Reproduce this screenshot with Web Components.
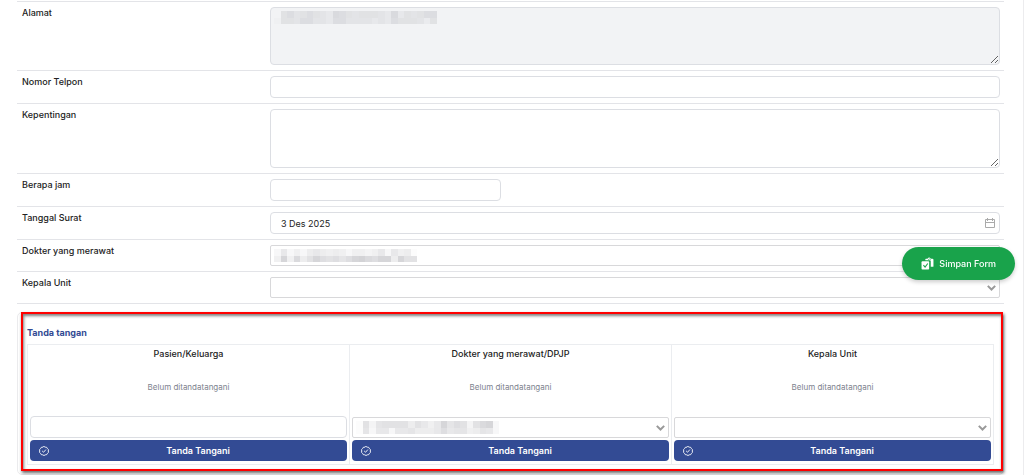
<!DOCTYPE html>
<html lang="id">
<head>
<meta charset="utf-8">
<title>Form</title>
<style>
    body {
        background: #fff;
        color: #222;
        font: 500 9px/12px Inter, "Liberation Sans", sans-serif;
        margin: 0;
    }
</style>
</head>
<body>
<surat-form></surat-form>

<script>
const controlStyles = `
    * {
        box-sizing: border-box;
    }

    input, textarea, select {
        appearance: none;
        background: white;
        border: 1px solid #dcdee3;
        border-radius: 4px;
        color: inherit;
        display: block;
        font: inherit;
        font-weight: 400;
        height: 22px;
        margin: 0;
        outline: none;
        padding: 0 10px;
        width: 100%;
    }

    textarea {
        height: 59px;
        padding: 5px 10px;
        resize: vertical;
    }

    textarea:disabled {
        background: #f2f3f5;
        height: 58px;
    }

    select {
        border-color: #d8d8da;
        border-radius: 2px;
        height: 21px;
    }
`;

// Obscured value, one hex digit per block: 0 is clear, f is darkest
class MaskedValue extends HTMLElement {
    constructor() {
        super();
        this.attachShadow({ mode: 'open' });
    }

    connectedCallback() {
        const rows = this.getAttribute('pattern').split('/');
        const width = rows[0].length * 10;
        const height = rows.length * 10;
        const cells = rows.map((row, y) => [...row].map((digit, x) =>
            `<rect x="${x * 10}" y="${y * 10}" width="10" height="10" fill-opacity="${parseInt(digit, 16) / 60}"/>`
        ).join('')).join('');
        this.shadowRoot.innerHTML = `
            <style>
                :host {
                    display: block;
                    left: 4px;
                    pointer-events: none;
                    position: absolute;
                    top: 4px;
                }

                svg {
                    display: block;
                    fill: #223;
                    height: 13px;
                }
            </style>
            <svg viewBox="0 0 ${width} ${height}" shape-rendering="crispEdges" aria-hidden="true">${cells}</svg>
        `;
    }
}

class SelectBox extends HTMLElement {
    constructor() {
        super();
        this.attachShadow({ mode: 'open' });
    }

    connectedCallback() {
        this.shadowRoot.innerHTML = `
            <style>
                ${controlStyles}

                :host {
                    display: block;
                    position: relative;
                }

                svg {
                    height: 6px;
                    pointer-events: none;
                    position: absolute;
                    right: 4px;
                    top: 8px;
                    width: 9px;
                }
            </style>
            <select aria-label="${this.getAttribute('label')}"><option></option></select>
            <slot></slot>
            <svg viewBox="0 0 9 6" fill="none" stroke="#999" stroke-width="2"><path d="M.8 .9 4.5 4.5 8.2 .9"/></svg>
        `;
    }
}

class FormRow extends HTMLElement {
    constructor() {
        super();
        this.attachShadow({ mode: 'open' });
    }

    connectedCallback() {
        const label = this.getAttribute('label');
        const type = this.getAttribute('type');
        const controls = {
            area: '<textarea id="control"></textarea>',
            locked: '<textarea id="control" disabled></textarea>',
            text: '<input id="control" type="text">',
            short: '<input id="control" class="short" type="text">',
            date: `
                <input id="control" type="text" value="${this.getAttribute('value')}">
                <svg class="calendar" viewBox="0 0 10 10" fill="none" stroke="#aaa"><path d="M.5 1.5h9v8h-9zM.5 4.5h9M2.5 0v3M7.5 0v3"/></svg>
            `,
            select: `<select-box label="${label}"><slot></slot></select-box>`
        };
        // The select box names its own control
        const caption = type === 'select' ? `<span>${label}</span>` : `<label for="control">${label}</label>`;
        this.shadowRoot.innerHTML = `
            <style>
                ${controlStyles}

                :host {
                    border-bottom: 1px solid #e3e4e8;
                    display: grid;
                    grid-template-columns: 248px 1fr;
                    padding: 5px 4px 5px 5px;
                }

                #field {
                    position: relative;
                }

                .short {
                    max-width: 231px;
                }

                .calendar {
                    height: 10px;
                    position: absolute;
                    right: 5px;
                    top: 6px;
                    width: 10px;
                }
            </style>
            ${caption}
            <div id="field">
                ${controls[type]}
                ${type === 'select' ? '' : '<slot></slot>'}
            </div>
        `;
    }
}

class SignCell extends HTMLElement {
    constructor() {
        super();
        this.attachShadow({ mode: 'open' });
    }

    connectedCallback() {
        const name = this.getAttribute('name');
        const control = this.hasAttribute('select')
            ? `<select-box label="${name}"><slot></slot></select-box>`
            : `<input type="text" aria-label="${name}">`;
        this.shadowRoot.innerHTML = `
            <style>
                ${controlStyles}

                :host {
                    border-right: 1px solid #ebedf0;
                    display: flex;
                    flex-direction: column;
                    padding: 3px 2px;
                    text-align: center;
                }

                h3 {
                    font: inherit;
                    margin: 0;
                }

                p {
                    color: #7d828e;
                    font-size: 8px;
                    font-weight: 400;
                    margin: 21px 0 auto;
                }

                #actions {
                    display: grid;
                    gap: 2px;
                    margin-top: 23px;
                }

                button {
                    align-items: center;
                    background: #334b94;
                    border: 0;
                    border-radius: 4px;
                    color: white;
                    column-gap: 9px;
                    display: grid;
                    font: inherit;
                    font-weight: 600;
                    grid-template-columns: 10px 1fr;
                    height: 21px;
                    padding: 0 9px;
                    width: 100%;
                }

                button svg {
                    height: 10px;
                    width: 10px;
                }
            </style>
            <h3>${name}</h3>
            <p>Belum ditandatangani</p>
            <div id="actions">
                ${control}
                <button type="button">
                    <svg viewBox="0 0 20 20" fill="none" stroke="white" stroke-width="1.8" stroke-linecap="round" stroke-linejoin="round"><path d="M10 1 12.5 2.3 15.4 2.7 16.8 5.2 19 7.2 18.5 10 19 12.8 16.8 14.8 15.4 17.3 12.5 17.7 10 19 7.5 17.7 4.6 17.3 3.2 14.8 1 12.8 1.5 10 1 7.2 3.2 5.2 4.6 2.7 7.5 2.3Z"/><path d="m6.8 10.3 2.3 2.2 4.2-4.8"/></svg>
                    <span>Tanda Tangani</span>
                </button>
            </div>
        `;
    }
}

class SignPanel extends HTMLElement {
    constructor() {
        super();
        this.attachShadow({ mode: 'open' });
        this.shadowRoot.innerHTML = `
            <style>
                :host {
                    border: 1px solid #ebebed;
                    border-radius: 5px;
                    display: block;
                    margin-top: 8px;
                    padding: 14px 9px 9px;
                    position: relative;
                }

                h2 {
                    color: #334b94;
                    font: inherit;
                    font-weight: 700;
                    margin: 0 0 5px;
                }

                #cells {
                    border: 1px solid #ebedf0;
                    border-right: 0;
                    display: grid;
                    grid-template-columns: repeat(3, 1fr);
                }

                /* Red marker drawn over the panel */
                #marker {
                    border: 2px solid #f00;
                    box-shadow: 1px 2px 3px rgba(0, 0, 0, 0.6), inset 1px 2px 3px rgba(0, 0, 0, 0.5);
                    inset: -1px 0 3px 3px;
                    pointer-events: none;
                    position: absolute;
                }
            </style>
            <h2>Tanda tangan</h2>
            <div id="cells"><slot></slot></div>
            <div id="marker"></div>
        `;
    }
}

class SaveButton extends HTMLElement {
    constructor() {
        super();
        this.attachShadow({ mode: 'open' });
        this.shadowRoot.innerHTML = `
            <style>
                :host {
                    position: fixed;
                    right: 9px;
                    top: 247px;
                    z-index: 10;
                }

                button {
                    align-items: center;
                    background: #19a34b;
                    border: 0;
                    border-radius: 17px;
                    box-shadow: 0 2px 4px rgba(0, 0, 0, 0.2);
                    color: white;
                    display: flex;
                    font: inherit;
                    gap: 5px;
                    height: 33px;
                    padding: 0 19px;
                }

                svg {
                    height: 13px;
                    width: 13px;
                }
            </style>
            <button type="button">
                <svg viewBox="0 0 24 24"><path d="M8 6V4q0-1 1-1h3q3-4 6 0h3q2 0 2 2v12q0 1-1 1h-4V8q0-2-2-2Z" fill="white"/><path d="M13 5q2-3 5 0" fill="none" stroke="#19a34b" stroke-width="1.2"/><rect x="1" y="8" width="14" height="15" rx="1.5" fill="white"/><path d="m4.500 15 3 3.500 5-6.500" fill="none" stroke="#19a34b" stroke-width="2"/></svg>
                <slot></slot>
            </button>
        `;
    }
}

class SuratForm extends HTMLElement {
    constructor() {
        super();
        this.attachShadow({ mode: 'open' });
        this.shadowRoot.innerHTML = `
            <style>
                :host {
                    border-right: 1px solid #ececee;
                    box-sizing: border-box;
                    display: block;
                    min-height: 100vh;
                    padding: 1px 19px 0 17px;
                }

                #rows {
                    border-top: 1px solid #e3e4e8;
                }
            </style>
            <div id="rows">
                <form-row label="Alamat" type="locked">
                    <masked-value pattern="0564565437654555437354566/1554664436644443436555425"></masked-value>
                </form-row>
                <form-row label="Nomor Telpon" type="text"></form-row>
                <form-row label="Kepentingan" type="area"></form-row>
                <form-row label="Berapa jam" type="short"></form-row>
                <form-row label="Tanggal Surat" type="date" value="3 Des 2025"></form-row>
                <form-row label="Dokter yang merawat" type="select">
                    <masked-value pattern="2624256545424434626451/4b4a58b98979bca9bb5b881"></masked-value>
                </form-row>
                <form-row label="Kepala Unit" type="select"></form-row>
            </div>
            <sign-panel>
                <sign-cell name="Pasien/Keluarga"></sign-cell>
                <sign-cell name="Dokter yang merawat/DPJP" select>
                    <masked-value pattern="1837888858646b79838ab2/1726626675556967745762"></masked-value>
                </sign-cell>
                <sign-cell name="Kepala Unit" select></sign-cell>
            </sign-panel>
            <save-button>Simpan Form</save-button>
        `;
    }
}

customElements.define('masked-value', MaskedValue);
customElements.define('select-box', SelectBox);
customElements.define('form-row', FormRow);
customElements.define('sign-cell', SignCell);
customElements.define('sign-panel', SignPanel);
customElements.define('save-button', SaveButton);
customElements.define('surat-form', SuratForm);
</script>
</body>
</html>
